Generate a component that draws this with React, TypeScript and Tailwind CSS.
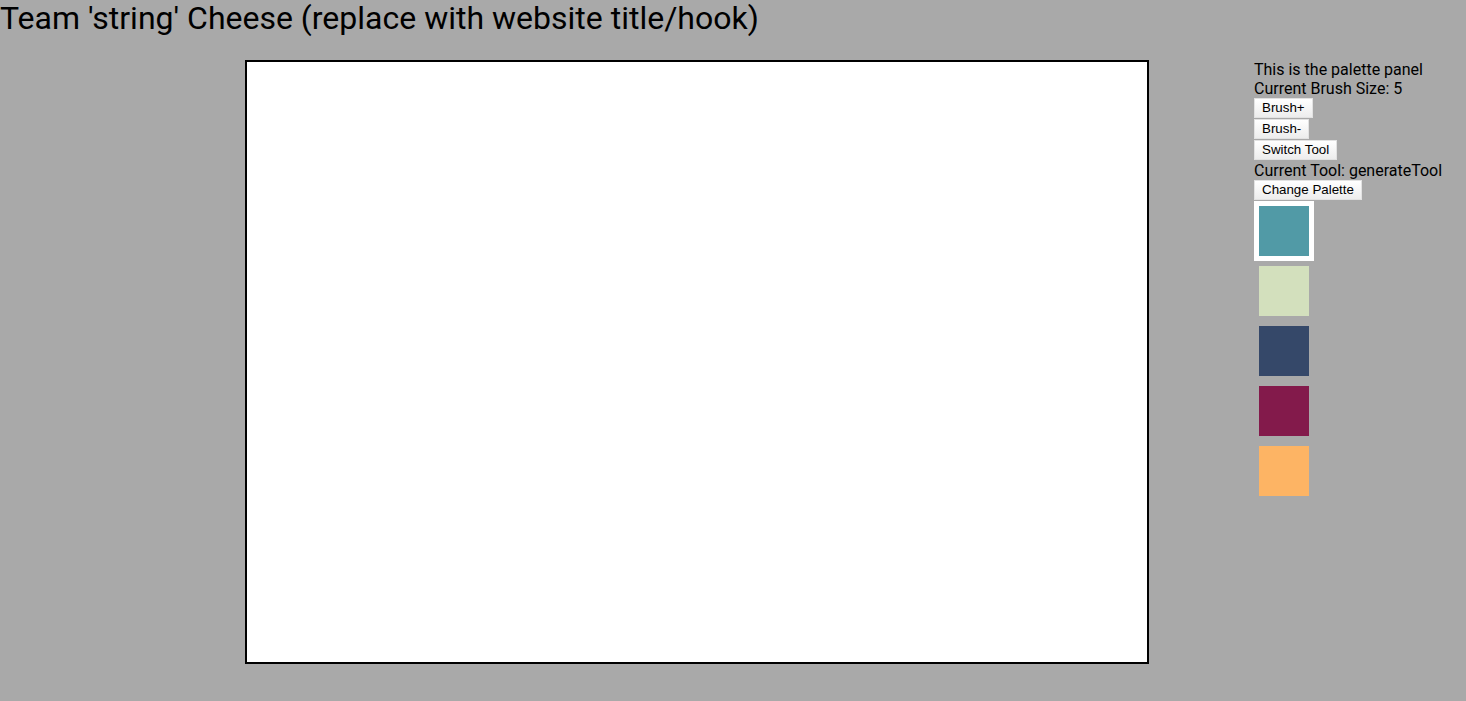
import { useState } from 'react'

const palette = ['#519aa6', '#d3e0bd', '#354869', '#831a4b', '#fdb464']

function PanelButton({ label, onClick }: { label: string; onClick?: () => void }) {
  return (
    <button
      onClick={onClick}
      className="block mb-px h-[20px] px-[7px] text-[13.33px] leading-[16px] text-black bg-gradient-to-b from-white to-[#ededed] border border-[#e2e2e2] font-['Liberation_Sans',Arial,sans-serif]"
    >
      {label}
    </button>
  )
}

export default function App() {
  const [brush, setBrush] = useState(5)
  const [selected, setSelected] = useState(0)

  return (
    <div className="min-h-screen w-full bg-[#a9a9a9] text-black font-['Roboto',sans-serif]">
      <h1 className="m-0 text-[32px] leading-[37px] font-normal whitespace-nowrap">
        Team 'string' Cheese (replace with website title/hook)
      </h1>

      <div className="flex items-start pl-[245px] pt-[23px] gap-[105px]">
        {/* Drawing canvas */}
        <div className="w-[904px] h-[604px] border-2 border-black bg-white" />

        {/* Palette panel */}
        <div className="flex flex-col items-start text-[16px] leading-[19px]">
          <div>This is the palette panel</div>
          <div>Current Brush Size: {brush}</div>
          <PanelButton label="Brush+" onClick={() => setBrush(brush + 1)} />
          <PanelButton label="Brush-" onClick={() => setBrush(Math.max(1, brush - 1))} />
          <PanelButton label="Switch Tool" />
          <div>Current Tool: generateTool</div>
          <PanelButton label="Change Palette" />
          <div className="flex flex-col">
            {palette.map((c, i) => (
              <div
                key={c}
                onClick={() => setSelected(i)}
                className={`w-[60px] h-[60px] border-[5px] ${i === selected ? 'border-white' : 'border-transparent'}`}
              >
                <div className="w-full h-full" style={{ backgroundColor: c }} />
              </div>
            ))}
          </div>
        </div>
      </div>
    </div>
  )
}
